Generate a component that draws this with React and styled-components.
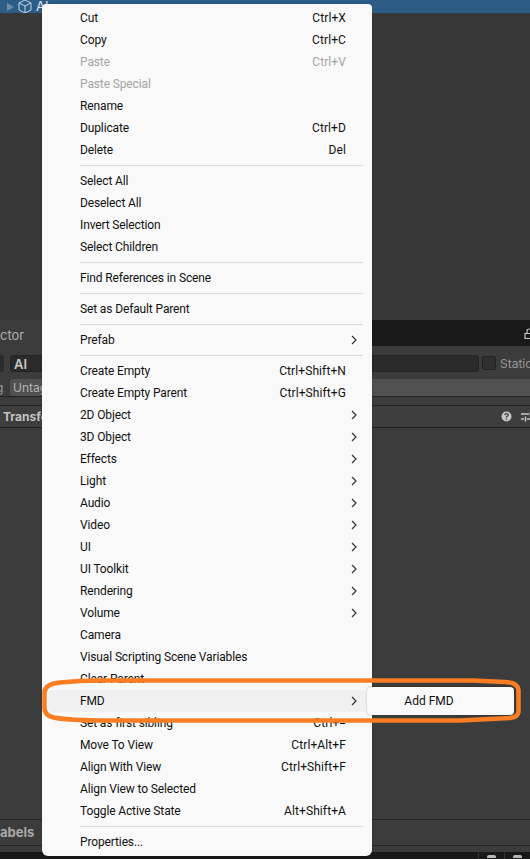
import React from 'react';
import styled, {createGlobalStyle} from 'styled-components';

const GlobalStyle = createGlobalStyle`
  html, body {
    margin: 0;
    padding: 0;
    background: #383838;
  }
  body {
    font-family: Inter, "Liberation Sans", sans-serif;
  }
`;

const Page = styled.div`
  position: relative;
  display: flex;
  flex-direction: column;
  width: 530px;
  height: 859px;
  overflow: hidden;
  background: #383838;
`;

const HierarchyRow = styled.div`
  display: flex;
  align-items: flex-start;
  height: 13px;
  padding-left: 7px;
  background: #2c5d87;
  color: #dfe8f0;
  font-size: 13px;
  line-height: 13px;
  overflow: hidden;
`;
const Arrow = styled.span`
  width: 0;
  height: 0;
  margin: 3px 4px 0 0;
  border-left: 7px solid #6f8ba5;
  border-top: 4px solid transparent;
  border-bottom: 4px solid transparent;
`;
const CubeSvg = styled.svg`
  margin: -1px 4px 0 0;
`;
const HierarchyBody = styled.div`
  height: 307px;
  background: #383838;
`;

const TabBar = styled.div`
  display: flex;
  align-items: center;
  justify-content: space-between;
  height: 26px;
  overflow: hidden;
  background: #191919;
`;
const Tab = styled.div`
  display: flex;
  align-items: center;
  width: 42px;
  height: 26px;
  padding-top: 3px;
  box-sizing: border-box;
  background: #3c3c3c;
  color: #b0b0b0;
  font-size: 13px;
`;
const LockSvg = styled.svg`
  flex: none;
  margin-right: -8px;
`;

const Inspector = styled.div`
  flex: 1;
  display: flex;
  flex-direction: column;
  background: #3c3c3c;
  color: #b4b4b4;
`;
const NameRow = styled.div`
  display: flex;
  align-items: flex-start;
  height: 33px;
  padding-top: 9px;
  box-sizing: border-box;
`;
const PickerEdge = styled.div`
  flex: none;
  width: 4px;
  height: 17px;
  margin-right: 6px;
  border-radius: 0 3px 3px 0;
  background: #2a2a2a;
`;
const NameField = styled.div`
  flex: none;
  display: flex;
  align-items: center;
  width: 469px;
  height: 17px;
  padding-left: 3px;
  box-sizing: border-box;
  border-radius: 3px;
  border: 1px solid #232323;
  background: #2a2a2a;
  color: #c8c8c8;
  font-size: 13px;
  font-weight: 600;
`;
const StaticBox = styled.div`
  flex: none;
  width: 14px;
  height: 14px;
  margin: 1px 0 0 3px;
  box-sizing: border-box;
  border-radius: 2px;
  background: #303030;
  border: 1px solid #212121;
`;
const StaticLabel = styled.div`
  flex: none;
  margin-left: 4px;
  font-size: 12px;
  line-height: 17px;
  color: #999;
  white-space: nowrap;
`;
const TagRow = styled.div`
  display: flex;
  align-items: flex-start;
  height: 18px;
  box-sizing: border-box;
  border-bottom: 1px solid #232323;
  color: #999;
  font-size: 12px;
  line-height: 17px;
  white-space: nowrap;
`;
const TagPrefix = styled.div`
  width: 14px;
  margin-left: -4px;
`;
const TagValue = styled.div`
  flex: 1;
  height: 17px;
  padding-left: 3px;
  background: #515151;
  border-radius: 3px 0 0 3px;
  color: #b4b4b4;
`;
const HeaderSpacer = styled.div`
  height: 9px;
  border-bottom: 1px solid #232323;
  box-sizing: border-box;
`;
const ComponentHeader = styled.div`
  display: flex;
  align-items: center;
  justify-content: space-between;
  height: 22px;
  box-sizing: border-box;
  padding-left: 3px;
  border-bottom: 1px solid #232323;
  background: #3e3e3e;
  color: #c4c4c4;
  font-size: 12px;
  font-weight: 700;
`;
const HeaderIcons = styled.div`
  display: flex;
  align-items: center;
  gap: 9px;
  margin-right: -5px;
`;
const InspectorBody = styled.div`
  flex: 1;
`;
const LabelsRow = styled.div`
  display: flex;
  align-items: center;
  height: 27px;
  padding-bottom: 2px;
  box-sizing: border-box;
  border-top: 1px solid #232323;
  border-bottom: 1px solid #232323;
  color: #a8a8a8;
  font-size: 13px;
  font-weight: 700;
`;
const FooterGap = styled.div`
  height: 6px;
`;
const StatusBar = styled.div`
  display: flex;
  justify-content: flex-end;
  height: 7px;
  background: #191919;
`;
const StatusCell = styled.div`
  width: 26px;
  box-sizing: border-box;
  border-left: 1px solid #333;
  display: flex;
  justify-content: center;
`;
const StatusMark = styled.span`
  width: 9px;
  height: 3px;
  margin-top: 3px;
  background: #b8b8b8;
  border-radius: 2px 2px 0 0;
`;

const Menu = styled.div`
  position: absolute;
  left: 42px;
  top: 4px;
  width: 330px;
  box-sizing: border-box;
  padding: 3px 0;
  background: #f9f9f9;
  border-radius: 4px 4px 6px 6px;
  box-shadow: 0 0 2px rgba(0, 0, 0, 0.35);
  font-family: Roboto, "Liberation Sans", sans-serif;
  font-size: 12px;
  line-height: 22px;
`;
const Row = styled.div`
  position: relative;
  display: flex;
  align-items: flex-start;
  justify-content: space-between;
  height: 22px;
  margin: 0 6px;
  padding: 0 20px 0 32px;
  border-radius: 4px;
  color: ${p => (p.$disabled ? '#a5a5a5' : '#111')};
  background: ${p => (p.$active ? '#f0f0f0' : 'transparent')};
  white-space: nowrap;
`;
const Label = styled.span`
  letter-spacing: -0.13px;
`;
const Keys = styled.span`
  letter-spacing: 0.1px;
`;
const Chevron = styled.svg`
  position: absolute;
  right: 7px;
  top: 6px;
  width: 10px;
  height: 10px;
`;
const Separator = styled.div`
  height: 1px;
  margin: 4px 9px 4px 38px;
  background: #d9d9d9;
`;
const SubMenu = styled.div`
  position: absolute;
  left: 367px;
  top: 687px;
  display: flex;
  align-items: center;
  justify-content: center;
  width: 147px;
  height: 28px;
  padding-right: 23px;
  box-sizing: border-box;
  border-radius: 4px;
  background: #f9f9f9;
  box-shadow: 0 0 2px rgba(0, 0, 0, 0.35);
  color: #111;
  font-family: Roboto, "Liberation Sans", sans-serif;
  font-size: 12px;
`;
const Highlight = styled.svg`
  position: absolute;
  left: 0;
  top: 0;
  pointer-events: none;
`;

const groups = [
  [
    {label: 'Cut', keys: 'Ctrl+X'},
    {label: 'Copy', keys: 'Ctrl+C'},
    {label: 'Paste', keys: 'Ctrl+V', disabled: true},
    {label: 'Paste Special', disabled: true},
    {label: 'Rename'},
    {label: 'Duplicate', keys: 'Ctrl+D'},
    {label: 'Delete', keys: 'Del'},
  ],
  [
    {label: 'Select All'},
    {label: 'Deselect All'},
    {label: 'Invert Selection'},
    {label: 'Select Children'},
  ],
  [{label: 'Find References in Scene'}],
  [{label: 'Set as Default Parent'}],
  [{label: 'Prefab', sub: true}],
  [
    {label: 'Create Empty', keys: 'Ctrl+Shift+N'},
    {label: 'Create Empty Parent', keys: 'Ctrl+Shift+G'},
    {label: '2D Object', sub: true},
    {label: '3D Object', sub: true},
    {label: 'Effects', sub: true},
    {label: 'Light', sub: true},
    {label: 'Audio', sub: true},
    {label: 'Video', sub: true},
    {label: 'UI', sub: true},
    {label: 'UI Toolkit', sub: true},
    {label: 'Rendering', sub: true},
    {label: 'Volume', sub: true},
    {label: 'Camera'},
    {label: 'Visual Scripting Scene Variables'},
    {label: 'Clear Parent'},
    {label: 'FMD', sub: true, active: true},
    {label: 'Set as first sibling', keys: 'Ctrl+='},
    {label: 'Move To View', keys: 'Ctrl+Alt+F'},
    {label: 'Align With View', keys: 'Ctrl+Shift+F'},
    {label: 'Align View to Selected'},
    {label: 'Toggle Active State', keys: 'Alt+Shift+A'},
  ],
  [{label: 'Properties...'}],
];

const App = () => (
  <Page>
    <GlobalStyle />
    <HierarchyRow>
      <Arrow />
      <CubeSvg width="14" height="15" viewBox="0 0 14 15" fill="none" stroke="#c6d4e0" strokeWidth="1">
        <path d="M7 1 L13 4 V11 L7 14 L1 11 V4 Z M1 4 L7 7 L13 4 M7 7 V14" />
      </CubeSvg>
      <span>AI</span>
    </HierarchyRow>
    <HierarchyBody />
    <TabBar>
      <Tab>ctor</Tab>
      <LockSvg width="14" height="11" viewBox="0 0 14 11" fill="none" stroke="#c8c8c8" strokeWidth="1.2">
        <path d="M1 5.5 H12 V10.5 H1 Z M3 5 V3 Q3 1 6 1 H14" />
      </LockSvg>
    </TabBar>
    <Inspector>
      <NameRow>
        <PickerEdge />
        <NameField>AI</NameField>
        <StaticBox />
        <StaticLabel>Static</StaticLabel>
      </NameRow>
      <TagRow>
        <TagPrefix>g</TagPrefix>
        <TagValue>Untagged</TagValue>
      </TagRow>
      <HeaderSpacer />
      <ComponentHeader>
        Transform
        <HeaderIcons>
          <svg width="11" height="11" viewBox="0 0 11 11">
            <circle cx="5.5" cy="5.5" r="5" fill="#c8c8c8" />
            <path d="M3.8 4.2 Q4 2.6 5.5 2.6 Q7.2 2.6 7.2 4 Q7.2 4.9 5.5 5.6 V6.6 M5.5 7.6 V8.8" stroke="#3e3e3e" strokeWidth="1.3" fill="none" />
          </svg>
          <svg width="14" height="11" viewBox="0 0 14 11" stroke="#c8c8c8" strokeWidth="1.4" fill="none">
            <path d="M0 3 H8 M11 3 H14 M9.5 0.5 V5.5 M0 8 H3 M6 8 H14 M4.5 5.5 V10.5" />
          </svg>
        </HeaderIcons>
      </ComponentHeader>
      <InspectorBody />
      <LabelsRow>abels</LabelsRow>
      <FooterGap />
      <StatusBar>
        <StatusCell><StatusMark /></StatusCell>
        <StatusCell><StatusMark /></StatusCell>
      </StatusBar>
    </Inspector>

    <Menu>
      {groups.map((group, i) => (
        <React.Fragment key={i}>
          {i > 0 && <Separator />}
          {group.map(item => (
            <Row key={item.label} $disabled={item.disabled} $active={item.active}>
              <Label>{item.label}</Label>
              {item.keys && <Keys>{item.keys}</Keys>}
              {item.sub && (
                <Chevron viewBox="0 0 10 10" fill="none" stroke="#333" strokeWidth="1.2">
                  <path d="M3 1 L7 5 L3 9" />
                </Chevron>
              )}
            </Row>
          ))}
        </React.Fragment>
      ))}
    </Menu>
    <SubMenu>Add FMD</SubMenu>

    <Highlight width="530" height="859" viewBox="0 0 530 859" fill="none" stroke="#fb7d22" strokeWidth="4.5">
      <path d="M100 680.5 H473 L505 682 Q518 682.5 518.5 690 V712 Q518 717 510 718 L460 720.5 H100 Q62 720 52 717 Q44.5 715 44.5 708 V692 Q45 684 60 682.5 Q80 680.5 100 680.5 Z" />
    </Highlight>
  </Page>
);

export default App;
